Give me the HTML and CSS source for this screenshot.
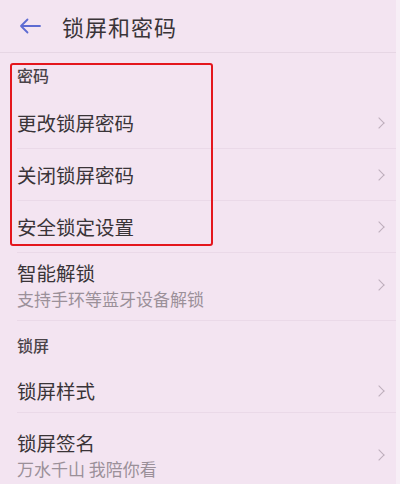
FILE: index.html
```html
<!DOCTYPE html>
<html lang="zh-CN">
<head>
  <meta charset="UTF-8" />
  <title>锁屏和密码</title>
  <link rel="stylesheet" href="styles.css">
</head>
<body>
  <div class="screen">
    <!-- =========  HEADER  ========= -->
    <header class="topbar">
      <svg class="back" width="22" height="16" viewBox="0 0 22 16" aria-hidden="true">
        <path d="M21 8H2M8.5 1.5L2 8l6.5 6.5" fill="none" stroke="#5d6bd2" stroke-width="1.8" stroke-linecap="round" stroke-linejoin="round"/>
      </svg>
      <h1>锁屏和密码</h1>
    </header>

    <!-- =========  密码  ========= -->
    <div class="group-title">密码</div>
    <div class="row"><span class="label">更改锁屏密码</span><i class="chev"></i></div>
    <div class="row"><span class="label">关闭锁屏密码</span><i class="chev"></i></div>
    <div class="row"><span class="label">安全锁定设置</span><i class="chev"></i></div>
    <div class="row row-tall">
      <div class="texts">
        <span class="label">智能解锁</span>
        <span class="sub">支持手环等蓝牙设备解锁</span>
      </div>
      <i class="chev"></i>
    </div>

    <!-- =========  锁屏  ========= -->
    <div class="group-title group-title-2">锁屏</div>
    <div class="row row-short"><span class="label">锁屏样式</span><i class="chev"></i></div>
    <div class="row row-last">
      <div class="texts">
        <span class="label">锁屏签名</span>
        <span class="sub">万水千山 我陪你看</span>
      </div>
      <i class="chev"></i>
    </div>

    <!-- annotation box drawn over the list -->
    <div class="highlight"></div>
  </div>
</body>
</html>
```

FILE: styles.css
```css
* { box-sizing: border-box; margin: 0; padding: 0; }

body {
  font-family: "Noto Sans CJK SC", "Noto Sans", sans-serif;
  background: #f3e4f1;
  color: #3b3539;
}

.screen {
  position: relative;
  width: 400px;
  height: 484px;
  overflow: hidden;
  background: #f3e4f1;
  border-right: 4px solid #f7eef6;
}

/* --- header --- */
.topbar {
  height: 53px;
  display: flex;
  align-items: center;
  padding-left: 19px;
  border-bottom: 1px solid #e6d6e4;
}
.back { margin-right: 21px; margin-top: -1px; }
.topbar h1 {
  font-size: 22px;
  font-weight: 400;
  letter-spacing: 1px;
  color: #3a3438;
}

/* --- groups and rows --- */
.group-title {
  height: 44px;
  display: flex;
  align-items: center;
  padding-left: 17px;
  font-size: 16px;
  font-weight: 500;
  color: #4a4348;
}
.group-title-2 { height: 48px; }

.row {
  height: 52px;
  display: flex;
  align-items: center;
  justify-content: space-between;
  margin-left: 17px;
  padding-right: 11px;
  border-bottom: 1px solid #ead9e8;
}
.row-short { height: 44px; }
.row-tall { height: 68px; padding-bottom: 4px; }
.row-last { height: 71px; padding-top: 12px; border-bottom: none; }

.label { font-size: 19.5px; color: #3a3438; }

.texts { display: flex; flex-direction: column; }
.texts .label { line-height: 28px; }
.sub { font-size: 17px; line-height: 24px; color: #9b9099; }

.chev {
  width: 8px;
  height: 8px;
  border-top: 1.5px solid #bdaebb;
  border-right: 1.5px solid #bdaebb;
  transform: rotate(45deg);
  margin-right: 2px;
}

/* --- red annotation box --- */
.highlight {
  position: absolute;
  left: 10px;
  top: 63px;
  width: 203px;
  height: 183px;
  border: 2.5px solid #e4161d;
  border-radius: 3px;
}
```
